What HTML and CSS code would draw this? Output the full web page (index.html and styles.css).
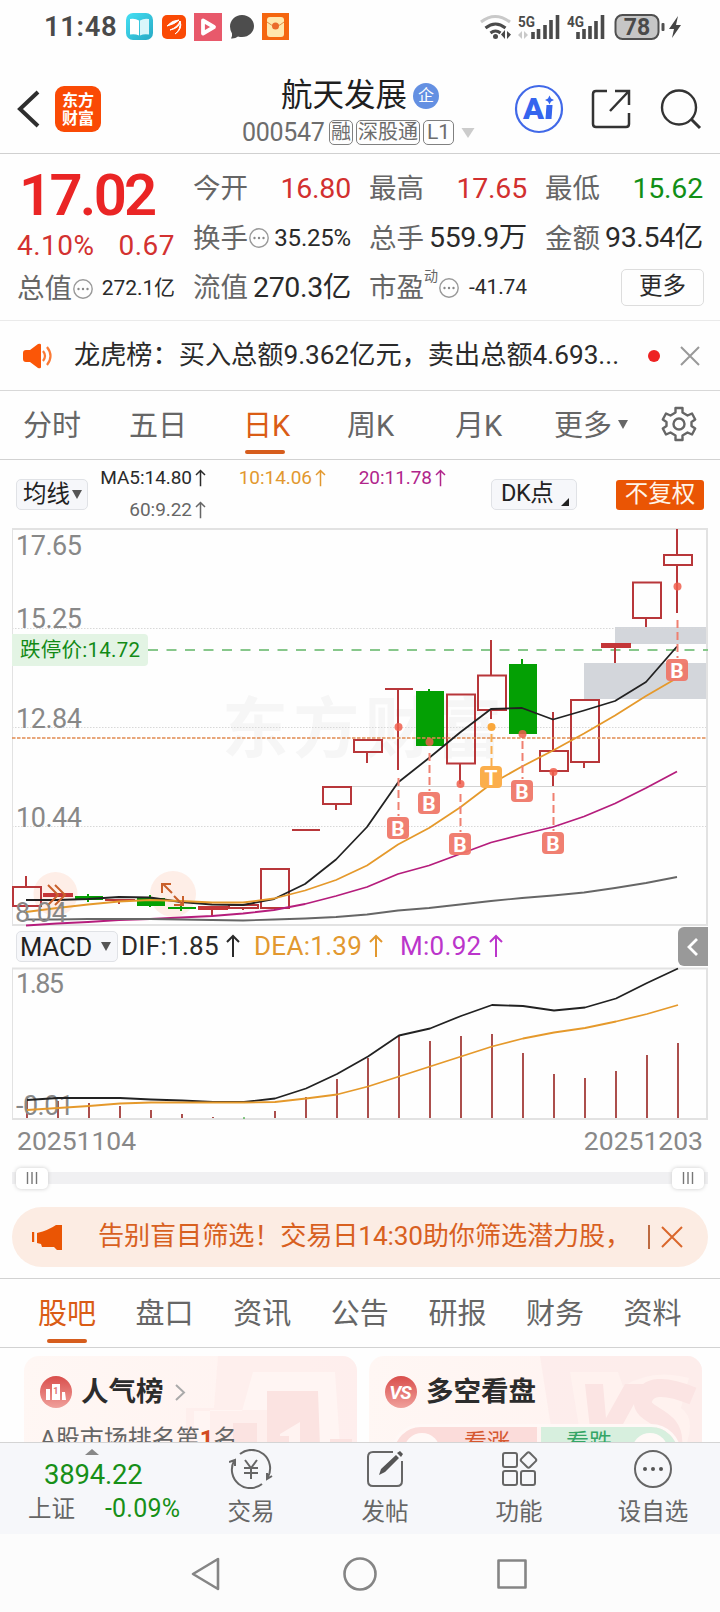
FILE: index.html
```html
<!DOCTYPE html>
<html lang="zh-CN">
<head>
<meta charset="utf-8">
<title>航天发展 000547</title>
<link rel="stylesheet" href="styles.css">
</head>
<body>
<svg class="defs" width="0" height="0">
  <symbol id="up" viewBox="0 0 14 24"><path d="M7 23V2M1 8l6-6 6 6" fill="none" stroke="currentColor" stroke-width="2"/></symbol>
  <symbol id="info" viewBox="0 0 20 20"><circle cx="10" cy="10" r="9.2" fill="none" stroke="#999" stroke-width="1.4"/><g fill="#888"><circle cx="5.5" cy="10" r="1.2"/><circle cx="10" cy="10" r="1.2"/><circle cx="14.500" cy="10" r="1.2"/></g></symbol>
  <linearGradient id="disc" x1="0" y1="0" x2="0" y2="1"><stop offset="0" stop-color="#d94e4b"/><stop offset="1" stop-color="#f0a09b"/></linearGradient>
</svg>

<div class="status">
  <span class="clock">11:48</span>
  <svg class="apps" width="170" height="54" viewBox="124 0 170 54">
    <defs><linearGradient id="bk" x1="0" y1="0" x2="1" y2="1"><stop offset="0" stop-color="#45e0f4"/><stop offset="1" stop-color="#27a9c4"/></linearGradient></defs>
    <rect x="126" y="13" width="27" height="27" rx="7" fill="url(#bk)"/>
    <path d="M130 19q5-1 9 1.500v15q-4-2-9-1z" fill="#fff"/><path d="M149 19q-5-1-9 1.500v15q4-2 9-1z" fill="#d9f6fa"/>
    <rect x="162" y="15" width="24" height="24" rx="5" fill="#fa4a05"/>
    <path d="M167 26q5-6 12-6-4 4-12 6zM170 30q8-3 10-9 0 7-10 9zM175 34q6-4 5-13 3 8-5 13z" fill="#fff" stroke="#fff"/>
    <rect x="194" y="13" width="28" height="28" fill="#e8596b"/>
    <path d="M203 20.500l11 6.500-11 6.500z" fill="none" stroke="#fff" stroke-width="3.800" stroke-linejoin="round"/>
    <path d="M242 15c7 0 12 5 12 11s-5 11-12 11q-2 0-4-.5-3 2.500-7 2 1.500-3 1-5-2-3-2-7c0-6 5-11.500 12-11.500z" fill="#4d4d4d"/>
    <rect x="262" y="13" width="27" height="27" fill="#f5660f"/>
    <rect x="267" y="17" width="17" height="20" rx="3" fill="#ffe7ae"/>
    <path d="M267 22q9 8 17 0" fill="none" stroke="#e08a43"/><circle cx="275.500" cy="26" r="3.500" fill="#ea6a2c"/>
  </svg>
  <svg class="signals" width="206" height="54" viewBox="478 0 206 54">
    <g fill="none" stroke="#4a4a4a" stroke-width="3">
      <path d="M481 22q14-11 29 0" stroke="#c9c9c9"/><path d="M485.500 28q10-8 20 0M490.500 33q5-4 10 0"/>
    </g>
    <circle cx="495.500" cy="36.500" r="2.500" fill="#4a4a4a"/>
    <path d="M505 30v9l-4-4.500zM507 31v8l4-4.500z" fill="#4a4a4a"/>
    <path d="M522 31v8l-4-4zM524 31v8l4-4z" fill="#c9c9c9"/>
    <path d="M533 39v-7M538.500 39v-10M545 39v-14M551 39V20M557.500 39V15M578 39v-7M584 39v-10M590 39v-13M596 39V21M602.500 39V15" stroke="#4a4a4a" stroke-width="3.600"/>
    <text x="518" y="26.500" textLength="17" lengthAdjust="spacingAndGlyphs" class="gen">5G</text>
    <text x="567" y="26.500" textLength="17" lengthAdjust="spacingAndGlyphs" class="gen">4G</text>
    <rect x="615.500" y="15" width="43" height="24" rx="7" fill="#c6c6c6" stroke="#505050" stroke-width="2"/>
    <rect x="661.500" y="23" width="3" height="8" rx="1" fill="#505050"/>
    <text x="637" y="35" text-anchor="middle" class="batt">78</text>
    <path d="M678 16l-9 13h5l-2 9 9-13h-5z" fill="#444"/>
  </svg>
</div>

<header class="header">
  <svg class="back" width="24" height="40" viewBox="0 0 24 40"><path d="M22 3L4 20l18 17" fill="none" stroke="#2e2e2e" stroke-width="4"/></svg>
  <div class="logo">东方<br>财富</div>
  <div class="stock">
    <div class="name">航天发展<span class="qi">企</span></div>
    <div class="code"><span class="num">000547</span><i>融</i><i>深股通</i><i class="l1">L1</i><svg width="14" height="10" viewBox="0 0 13 10"><path d="M0 0h13L6.500 10z" fill="#ccc"/></svg></div>
  </div>
  <svg class="tools" width="190" height="50" viewBox="514 84 190 50">
    <circle cx="539" cy="109" r="23" fill="none" stroke="#4169e8" stroke-width="2.200"/>
    <text x="523" y="118.500" class="ai" textLength="21" lengthAdjust="spacingAndGlyphs">A</text><path d="M546.500 105h6l-1 14h-6z" fill="#3565ee"/><path d="M549.500 95.500l1.500 3 3 1.500-3 1.500-1.500 3-1.500-3-3-1.500 3-1.500z" fill="#3565ee"/>
    <path d="M607 91h-11q-3 0-3 3v30q0 3 3 3h30q3 0 3-3v-11M615 91h14v14M628 92l-18 19" fill="none" stroke="#333" stroke-width="2.500"/>
    <circle cx="679" cy="107.500" r="17" fill="none" stroke="#333" stroke-width="2.400"/><path d="M691 119l9 9" stroke="#333" stroke-width="3"/>
  </svg>
</header>

<section class="quote">
  <div class="col first">
    <div class="price">17.02</div>
    <div class="row change"><span>4.10%</span><span>0.67</span></div>
    <div class="row"><span class="lab">总值<svg class="info"><use href="#info"/></svg></span><b class="sm">272.1亿</b></div>
  </div>
  <div class="col">
    <div class="row"><span class="lab">今开</span><b class="red">16.80</b></div>
    <div class="row"><span class="lab">换手<svg class="info"><use href="#info"/></svg></span><b class="md">35.25%</b></div>
    <div class="row"><span class="lab">流值</span><b>270.3亿</b></div>
  </div>
  <div class="col">
    <div class="row"><span class="lab">最高</span><b class="red">17.65</b></div>
    <div class="row"><span class="lab">总手</span><b>559.9万</b></div>
    <div class="row"><span class="lab">市盈<sup>动</sup><svg class="info"><use href="#info"/></svg></span><b class="sm">-41.74</b></div>
  </div>
  <div class="col">
    <div class="row"><span class="lab">最低</span><b class="green">15.62</b></div>
    <div class="row"><span class="lab">金额</span><b>93.54亿</b></div>
    <div class="row end"><span class="more">更多</span></div>
  </div>
</section>

<section class="news">
  <svg width="32" height="26" viewBox="0 0 32 26"><path d="M0 10q0-3 3-3h4l8-6q3-1 3 1v22q0 2-3 1l-8-6H3q-3 0-3-3z" fill="#fb5607"/><path d="M20 8q4 5 0 10M24 4q7 9 0 18" fill="none" stroke="#fb7a35" stroke-width="2.200"/></svg>
  <span class="news-text">龙虎榜：买入总额9.362亿元，卖出总额4.693...</span>
  <span class="dot"></span>
  <svg width="20" height="20" viewBox="0 0 20 20"><path d="M1 1l18 18M19 1L1 19" stroke="#999" stroke-width="2"/></svg>
</section>

<nav class="periods">
  <span class="p1">分时</span><span class="p2">五日</span><span class="p3 on">日K</span><span class="p4">周K</span><span class="p5">月K</span><span class="p6">更多<svg width="10" height="9" viewBox="0 0 10 9"><path d="M0 0h10L5 9z" fill="#666"/></svg></span>
  <svg class="gear" width="36" height="36" viewBox="0 0 36 36"><path d="M14.500 2h7v4.500l5 3 4.500-2 3.200 6-3.700 2.500v4l3.700 2.500-3.200 6-4.500-2-5 3V34h-7v-4.500l-5-3-4.500 2-3.200-6L5.500 20v-4l-3.700-2.500 3.200-6 4.500 2 5-3z" fill="none" stroke="#666" stroke-width="2.400" stroke-linejoin="round"/><circle cx="18" cy="18" r="5.500" fill="none" stroke="#666" stroke-width="2.400"/></svg>
</nav>

<section class="averages">
  <span class="chip avg">均线<svg width="10" height="9" viewBox="0 0 10 9"><path d="M0 0h10L5 9z" fill="#555"/></svg></span>
  <div class="ma">
    <span>MA5:14.80<svg><use href="#up"/></svg></span><span class="or">10:14.06<svg><use href="#up"/></svg></span><span class="mg">20:11.78<svg><use href="#up"/></svg></span>
    <span class="gy">60:9.22<svg><use href="#up"/></svg></span>
  </div>
  <span class="chip dk">DK点<svg width="8" height="8" viewBox="0 0 8 8"><path d="M8 0v8H0z" fill="#222"/></svg></span>
  <span class="fq">不复权</span>
</section>

<svg class="kline" width="720" height="399" viewBox="0 527 720 399">
  <text x="222" y="751" class="watermark" textLength="280">东方财富</text>
  <g fill="#d3d6db"><path d="M615 626h92v17h-92zM584 662h123v36H584z"/></g>
  <path d="M12 627.500h695M12 726.500h695M12 825.500h695" stroke="#d8d8d8" stroke-dasharray="1.500 1.500"/>
  <path d="M352 785.500h355" stroke="#d2d2d2"/>
  <path d="M12.500 528V924" stroke="#e2e2e2"/><path d="M12 528h695v396H12" fill="none" stroke="#e2e2e2" stroke-width="2"/>
  <path d="M148 649h560" stroke="#87c78b" stroke-width="2" stroke-dasharray="10 8.500"/>
  <circle cx="55.500" cy="893" r="22" fill="#feeee7"/><circle cx="173" cy="893" r="23" fill="#feeee7"/>
  <g fill="none" stroke="#b8373a" stroke-width="2">
    <path d="M13 886h28v19H13zM261 868h28v39h-28zM323 786h28v17h-28zM354 739h28v12h-28zM447 693.500h28v69h-28zM478 674.500h28v34.500h-28zM540 750h28v20h-28zM571 699h28v62h-28zM633 581.500h28v35.500h-28zM664 554h28v10h-28zM229 904h29v3h-29z"/>
    <path d="M26 875v11M292 829h28M336 804v5M367 752v10M398 688v81M385 688h28M460 763v20M491 639v35M491 709v9M553 711v39M553 770v15M584 761v6M615 647v15M646 617v9M677 528v26M677 565v47M119 899v4M212 907v8M243 907v2M105 899h30"/>
  </g>
  <path d="M43 892h30v4H43zM601 642h30v5h-30zM198 905h30v4h-30z" fill="#c43638"/>
  <path d="M75 895h28v4H75zM137 897h28v8h-28zM168 906h28v2h-28zM416 690h28v55h-28zM509 663h28v70h-28zM87 893h2v8h-2zM149 894h2v12h-2zM180 904h2v6h-2zM428 688h2v3h-2zM521 658h2v6h-2z" fill="#04a004"/>
  <path d="M12 737h695" stroke="#e18a50" stroke-dasharray="3.500 1.500" stroke-width="1.600"/>
  <g fill="none" stroke-width="1.800" stroke-linejoin="round">
    <path stroke="#222" d="M26 899L57 899 88 898 119 896 150 896.500 181 901 212 903.500 243 904 274 898 305 883 336 858.500 367 826 398 781.500 429 757 460 731.500 491 708 522 707 553 718.500 584 709.500 615 700 646 681 677 645.500"/>
    <path stroke="#e5992b" d="M26 911L57 907 88 903.500 119 900.500 150 899 181 900 212 901.500 243 901.500 274 897.500 305 889.500 336 879 367 864.500 398 843.500 429 827 460 806.500 491 783 522 765.500 553 749.500 584 732.500 615 714.500 646 695 677 677"/>
    <path stroke="#b51d7c" d="M26 924.500L57 922.500 88 921 119 919 150 918 181 916.500 212 915 243 912.500 274 909 305 903 336 895 367 886 398 873 429 864.500 460 853 491 841.500 522 833.500 553 826 584 815.500 615 802.500 646 787 677 770.500"/>
    <path stroke="#666" d="M26 918.500L57 918.500 88 918 119 918 150 918 181 918.500 212 919 243 919.500 274 918.500 305 917.500 336 916 367 913.500 398 909.500 429 907 460 903.500 491 900 522 897 553 894.500 584 891.500 615 887 646 882 677 876"/>
  </g>
  <g fill="none" stroke="#c9602b" stroke-width="2"><path d="M48 884l10 10-10 10M55 884l10 10-10 10M172 892l-9-9M162 892v-9h9M174 895l9 9M183 895v9h-9"/></g>
  <g stroke="#ef8071" stroke-width="2" stroke-dasharray="8 4" fill="none">
    <path d="M398.500 777v38M429.500 752v38M460.500 793v38M522.500 740v38M553.500 792v38M677.500 619v38"/><path d="M491.500 733v32" stroke="#f8ad4f"/>
  </g>
  <g fill="#f05e4c" fill-opacity=".85"><circle cx="398.500" cy="726" r="4"/><circle cx="429.500" cy="741" r="4"/><circle cx="460.500" cy="783" r="4"/><circle cx="522.500" cy="733" r="4"/><circle cx="553.500" cy="771" r="4"/><circle cx="677.500" cy="585.500" r="4"/></g>
  <circle cx="491.500" cy="726" r="4" fill="#faa83c"/>
  <g fill="#ef7566" fill-opacity=".93"><rect x="387" y="816" width="22" height="22" rx="4"/><rect x="418" y="791" width="22" height="22" rx="4"/><rect x="449" y="832" width="22" height="22" rx="4"/><rect x="511" y="779" width="22" height="22" rx="4"/><rect x="542" y="831" width="22" height="22" rx="4"/><rect x="666" y="658" width="22" height="22" rx="4"/></g>
  <rect x="480" y="765" width="22" height="22" rx="4" fill="#fbae4b"/>
  <g class="mark"><text x="398" y="834.500">B</text><text x="429" y="809.500">B</text><text x="460" y="850.500">B</text><text x="491" y="783.500">T</text><text x="522" y="797.500">B</text><text x="553" y="849.500">B</text><text x="677" y="676.500">B</text></g>
  <path d="M12 633h132q4 0 4 4v24q0 4-4 4H12z" fill="#e3f4e4"/>
  <text x="20" y="656" class="limit" textLength="120">跌停价:14.72</text>
  <g class="axis"><text x="16" y="554" textLength="66">17.65</text><text x="16" y="627" textLength="66">15.25</text><text x="16" y="727" textLength="66">12.84</text><text x="16" y="826" textLength="66">10.44</text><text x="15" y="921" textLength="52">8.04</text></g>
</svg>

<section class="macd-bar">
  <span class="chip macd">MACD<svg width="10" height="9" viewBox="0 0 10 9"><path d="M0 0h10L5 9z" fill="#555"/></svg></span>
  <span class="dif">DIF:1.85<svg><use href="#up"/></svg></span><span class="dea">DEA:1.39<svg><use href="#up"/></svg></span><span class="m">M:0.92<svg><use href="#up"/></svg></span>
  <span class="fold"><svg width="30" height="39" viewBox="0 0 30 39"><path d="M19 12l-8 8 8 8" fill="none" stroke="#fff" stroke-width="2.800"/></svg></span>
</section>

<svg class="macd-chart" width="720" height="154" viewBox="0 966 720 154">
  <path d="M12.500 967v151" stroke="#e2e2e2"/><path d="M12 967.500h695V1118H12" fill="none" stroke="#e2e2e2" stroke-width="2"/>
  <path stroke="#a33c3a" stroke-width="1.800" d="M27 1117v-20M58 1117v-17M89 1117v-15M120 1117v-12M151 1117v-8M182 1117v-4M213 1117v-1M275 1117v-7M306 1117v-21M337 1117v-39M368 1117v-60M399 1117v-82M430 1117v-77M461 1117v-82M492 1117v-84M523 1117v-65M554 1117v-44M585 1117v-40M616 1117v-47M647 1117v-63M678 1117v-75"/>
  <path d="M243 1117h2" stroke="#159a15"/>
  <g class="axis"><text x="16" y="992" textLength="48">1.85</text><text x="16" y="1114" textLength="58">-0.01</text></g>
  <g fill="none" stroke-width="1.800" stroke-linejoin="round">
    <path stroke="#222" d="M27 1099L58 1097 89 1097 120 1097 151 1098.500 182 1099.500 213 1101 244 1101 275 1097.500 306 1087.500 337 1073 368 1055.500 399 1034.500 430 1027.500 461 1015 492 1004 523 1005 554 1009.500 585 1006.500 616 997.500 647 982 678 967.500"/>
    <path stroke="#e5992b" d="M27 1109L58 1107 89 1105 120 1102.500 151 1101.500 182 1101.500 213 1101.500 244 1101.500 275 1101 306 1097.500 337 1093.500 368 1085.500 399 1075.500 430 1065.500 461 1055.500 492 1045.500 523 1037.500 554 1031.500 585 1027 616 1020.500 647 1013 678 1004"/>
  </g>
</svg>

<div class="dates"><span>20251104</span><span>20251203</span></div>
<div class="slider"><span class="knob"><svg width="12" height="12"><path d="M1.500 0v12M6 0v12M10.500 0v12" stroke="#777" stroke-width="1.400"/></svg></span><span class="knob"><svg width="12" height="12"><path d="M1.500 0v12M6 0v12M10.500 0v12" stroke="#777" stroke-width="1.400"/></svg></span></div>

<section class="banner">
  <svg width="32" height="28" viewBox="0 0 32 28"><path d="M1 9v10" stroke="#ea5504" stroke-width="2.400"/><path d="M5 10q12-3 19-8h6v25h-5l-3-3h-12l-1-3-4-1z" fill="#ea5504"/></svg>
  <span class="banner-text">告别盲目筛选！交易日14:30助你筛选潜力股，</span>
  <span class="bar"></span>
  <svg width="22" height="22" viewBox="0 0 22 22"><path d="M1 1l20 20M21 1L1 21" stroke="#da672c" stroke-width="2"/></svg>
</section>

<nav class="tabs"><span class="on">股吧</span><span>盘口</span><span>资讯</span><span>公告</span><span>研报</span><span>财务</span><span>资料</span></nav>

<section class="cards">
  <article class="card rank">
    <svg class="deco" width="333" height="90" viewBox="0 0 333 90"><path d="M194 0h139v90H162V52h28z" fill="#fdeceb" opacity=".7"/><path d="M229 16h82l5 74h-40V54H186V90h-16V55h48z" fill="#fff5f3"/><path d="M243 35h51l2 55h-53zM209 67h24v23h-24zM306 83h22v7h-22z" fill="#fbe3e1"/><path d="M256 78l20-12v24h-11V80h-9z" fill="#fff3f1"/></svg>
    <h3><svg width="32" height="32" viewBox="0 0 32 32"><circle cx="16" cy="16" r="16" fill="url(#disc)"/><path d="M6 24V13h4v11zM12 24V8h8v16zM22 24v-8h3l1 8z" fill="#fff"/><text x="15.800" y="18" text-anchor="middle" class="one">1</text></svg>人气榜<svg class="chev" width="11" height="17" viewBox="0 0 11 17"><path d="M1 1l8 7.500L1 16" fill="none" stroke="#aaa" stroke-width="2"/></svg></h3>
    <p>A股市场排名第<em>1</em>名</p>
  </article>
  <article class="card versus">
    <svg class="deco" width="333" height="90" viewBox="0 0 333 90"><path d="M171 0h162v90H185z" fill="#fdebea" opacity=".8"/><path d="M201 16h48l5 14q30-18 66-8l-8 30q15 10 5 38H213z" fill="#fff3f1" opacity=".7"/><path d="M216 28h18l3 34 19-34h20l-34 62h-19z" fill="#fbe4e3"/><path d="M324 40q-44-18-50 4c-3 18 34 14 30 46" fill="none" stroke="#fbe4e3" stroke-width="18"/></svg>
    <h3><svg width="32" height="32" viewBox="0 0 32 32"><circle cx="16" cy="16" r="16" fill="url(#disc)"/><text x="15" y="23" text-anchor="middle" class="vs">VS</text></svg>多空看盘</h3>
    <div class="vote"><span class="rise"><i></i>看涨</span><span class="fall">看跌<i></i></span></div>
  </article>
</section>

<footer class="dock">
  <div class="index"><svg width="14" height="6" viewBox="0 0 14 6"><path d="M0 6l7-6 7 6z" fill="#888"/></svg><strong>3894.22</strong><div><span>上证</span><span class="pct">-0.09%</span></div></div>
  <div class="act"><svg width="44" height="40" viewBox="-22 -20 44 40"><g fill="none" stroke="#666" stroke-width="2"><path d="M-11-15A18.500 18.500 0 0 1 17 8M11 15A18.500 18.500 0 0 1-17-8M-22-7l6-2v6M21 7l-5 3v-6M-6-9l6 8 6-8M-7-1H7M-7 4H7M0-1v11"/></g></svg>交易</div>
  <div class="act"><svg width="44" height="40" viewBox="-22 -20 44 40"><path d="M8-17h-20q-5 0-5 5v24q0 5 5 5h24q5 0 5-5V-8" fill="none" stroke="#666" stroke-width="2"/><path d="M-6 6l2-6 15-14 3 3L0 3zM12-16l3-2 3 3-2 3z" fill="#555"/></svg>发帖</div>
  <div class="act"><svg width="44" height="40" viewBox="-22 -20 44 40"><g fill="none" stroke="#666" stroke-width="2"><rect x="-16" y="-16" width="14" height="14" rx="2"/><rect x="-16" y="2" width="14" height="14" rx="2"/><rect x="2" y="2" width="14" height="14" rx="2"/><rect x="3.500" y="-15" width="12" height="12" rx="2" transform="rotate(45 9.500 -9)"/></g></svg>功能</div>
  <div class="act"><svg width="44" height="40" viewBox="-22 -20 44 40"><circle r="18" fill="none" stroke="#666" stroke-width="2"/><g fill="#555"><circle cx="-8" r="2"/><circle r="2"/><circle cx="8" r="2"/></g></svg>设自选</div>
</footer>

<div class="sysnav">
  <svg width="720" height="80" viewBox="0 0 720 80"><g fill="none" stroke="#858585" stroke-width="2.600" stroke-linejoin="round"><path d="M193 40l25-15v30z"/><circle cx="360" cy="40" r="15.500"/><rect x="498.500" y="26.500" width="27" height="27"/></g></svg>
</div>
</body>
</html>
```

FILE: styles.css
```css
* { box-sizing: border-box; }
body { margin: 0; width: 720px; height: 1612px; overflow: hidden; background: #fefefe; color: #2a2a2a; font-family: Roboto, "Noto Sans CJK SC", sans-serif; line-height: 1.2; display: flex; flex-direction: column; }
body > * { flex: none; }
svg { display: block; flex: none; }
.defs { position: absolute; }
i, em { font-style: normal; }

.status { height: 54px; display: flex; }
.clock { width: 80px; margin-left: 44px; font-size: 27.5px; font-weight: 600; color: #4a4a4a; line-height: 54px; letter-spacing: .6px; }
.signals { margin-left: 184px; }
.gen { font: 700 15px Roboto, sans-serif; fill: #4a4a4a; }
.batt { font: 700 23px Roboto, sans-serif; fill: #4a4a4a; }

.header { height: 100px; border-bottom: 1px solid #d0d0d0; display: flex; align-items: center; padding: 10px 0 0 16px; }
.logo { width: 46px; height: 46px; margin-left: 15px; border-radius: 9px; background: #fa4a05; color: #fff; font: 700 16px/18px "Noto Sans CJK SC", sans-serif; text-align: center; padding-top: 4px; }
.stock { width: 256px; margin: 6px 16px 0 141px; }
.name { display: flex; align-items: center; font-size: 31.5px; line-height: 36px; margin-left: 39px; width: max-content; color: #1f1f1f; }
.qi { width: 26px; height: 26px; margin-left: 6px; border-radius: 50%; background: #6490e2; color: #fff; font-size: 16px; line-height: 25px; text-align: center; }
.code { display: flex; align-items: center; gap: 3px; height: 26px; margin-top: 6px; font-size: 25px; color: #6d6d6d; }
.code .num { width: 84px; letter-spacing: -.3px; }
.code i { height: 25px; border: 1.500px solid #808080; border-radius: 5px; font-size: 20px; line-height: 22px; padding: 0 1px; white-space: nowrap; }
.code .l1 { padding: 0 3px; font-size: 21px; }
.code svg { margin-left: 4px; }
.ai { font: 900 29px Roboto, sans-serif; fill: #3565ee; }

.quote { height: 167px; border-bottom: 1px solid #eaeaea; padding: 9px 16px 0 17px; display: flex; gap: 18px; }
.col { width: 158px; padding-top: 1px; display: flex; flex-direction: column; }
.col.first { padding-top: 0; }
.row { height: 49.5px; display: flex; align-items: center; justify-content: space-between; white-space: nowrap; }
.lab { display: flex; align-items: center; font-size: 27.5px; color: #666; }
.info { width: 20px; height: 20px; margin-left: 1px; }
.lab sup { font-size: 14px; line-height: 14px; margin-top: -24px; }
.row b { font-weight: 400; font-size: 28.5px; letter-spacing: -.35px; }
.row .md { font-size: 24px; letter-spacing: -.2px; }
.row .sm { font-size: 21px; letter-spacing: -.1px; }
.row .red { color: #d2302f; letter-spacing: -.2px; }
.row .green { color: #128f16; letter-spacing: -.2px; }
.price { height: 64px; margin-left: 2px; font-size: 58px; font-weight: 600; color: #ea2525; letter-spacing: -2.7px; line-height: 64px; }
.change { height: 37px; padding-top: 1px; color: #d33130; font-size: 28px; letter-spacing: .5px; }
.end { justify-content: flex-end; }
.more { width: 83px; height: 37px; border: 1.500px solid #ddd; border-radius: 5px; font-size: 23.5px; line-height: 32px; text-align: center; margin-right: -1px; }

.news { height: 70px; border-bottom: 1px solid #d8d8d8; display: flex; align-items: center; padding-left: 23px; }
.news-text { width: 546px; margin-left: 19px; font-size: 26.2px; white-space: nowrap; }
.dot { width: 12px; height: 12px; border-radius: 50%; background: #ee2222; margin: 0 20px 0 28px; }

.periods { height: 69px; border-bottom: 1px solid #d2d2d2; display: flex; align-items: center; padding: 0 0 2px 23px; font-size: 29px; color: #666; }
.periods span { white-space: nowrap; display: flex; align-items: center; height: 67px; padding-top: 5px; }
.p1 { width: 106px; } .p2 { width: 114px; } .p3 { width: 104px; } .p4 { width: 108px; } .p5 { width: 99px; } .p6 { width: 107px; }
.p6 svg { margin: -4px 0 0 6px; }
.on { color: #da5c15; position: relative; }
.on::after { content: ""; position: absolute; left: 2px; bottom: 4px; width: 40px; height: 4px; border-radius: 2px; background: #d65d1d; }

.averages { height: 68px; display: flex; padding: 0 16px; }
.chip { display: flex; align-items: center; border: 1.500px solid #e0e2e6; border-radius: 5px; background: #f6f7fa; color: #222; white-space: nowrap; }
.avg { width: 72px; height: 31px; margin-top: 19px; padding: 0 0 1px 6px; font-size: 23.500px; gap: 2px; }
.ma { display: grid; grid-template-columns: 106px 120px 120px; grid-template-rows: 32px 32px; justify-items: end; width: 346px; margin: 2px 0 0 12px; font-size: 19px; }
.ma span { display: flex; align-items: center; gap: 3px; height: 32px; letter-spacing: -.05px; }
.ma svg { width: 11px; height: 18px; }
.or { color: #e2982f; } .mg { color: #b0258b; } .gy { color: #666; }
.dk { width: 86px; height: 31px; margin: 19px 0 0 45px; padding: 0 0 2px 9px; font-size: 23.500px; letter-spacing: -.4px; gap: 8px; }
.dk svg { margin-top: 16px; }
.fq { width: 88px; height: 30px; margin: 20px 0 0 39px; border-radius: 3px; background: #ea5504; color: #fff4e8; font-size: 23.500px; line-height: 28px; text-align: center; }

.watermark { font: 700 66px "Noto Sans CJK SC", sans-serif; fill: #f6f6f6; }
.axis { font: 27px Roboto, sans-serif; fill: #888; }
.limit { font: 20.5px Roboto, "Noto Sans CJK SC", sans-serif; fill: #128a16; }
.mark { font: 700 21px Roboto, sans-serif; fill: #fff; text-anchor: middle; }

.macd-bar { height: 40px; display: flex; align-items: flex-start; font-size: 26px; line-height: 30px; }
.macd-bar > span { margin-top: 4px; }
.dif, .dea, .m { display: flex; align-items: center; gap: 7px; white-space: nowrap; letter-spacing: .3px; }
.dif svg, .dea svg, .m svg { width: 14px; height: 24px; }
.macd { width: 102px; height: 31px; margin-left: 16px; padding-left: 3px; gap: 9px; font-size: 25.500px; }
.dif { margin-left: 3px; width: 133px; }
.dea { width: 146px; color: #e2982f; }
.m { width: 145px; color: #bb35cb; }
.macd-bar .fold { margin: 0 0 0 133px; width: 30px; height: 39px; border-radius: 6px 0 0 6px; background: #999; }

.dates { height: 43px; display: flex; justify-content: space-between; padding: 0 17px; font-size: 26.500px; line-height: 40px; color: #888; }
.slider { height: 28px; display: flex; justify-content: space-between; align-items: center; padding: 0 4px; margin: 0 12px; background: linear-gradient(#f0f0f2, #f0f0f2) center / 100% 12px no-repeat; }
.knob { width: 32px; height: 21px; border-radius: 5px; background: #fff; box-shadow: 0 0 4px #ccc; display: flex; align-items: center; justify-content: center; }
.banner { height: 60px; margin: 15px 12px 0; border-radius: 30px; background: #fcece3; display: flex; align-items: center; padding-left: 20px; }
.banner-text { width: 545px; margin-left: 34px; font-size: 26.200px; color: #d8601f; white-space: nowrap; letter-spacing: -.15px; padding-bottom: 1px; }
.bar { width: 1.500px; height: 24px; background: #bd6a40; margin: 0 11px 0 5px; }

.tabs { height: 70px; margin-top: 11px; border-top: 1px solid #d2d2d2; border-bottom: 1px solid #d2d2d2; display: flex; gap: 39.600px; padding-left: 38px; font-size: 29px; line-height: 71px; color: #666; white-space: nowrap; }
.tabs span { width: 58px; height: 68px; }
.tabs .on { color: #da5c15; }
.tabs .on::after { left: 9px; }

.cards { height: 94px; padding: 8px 0 0 24px; display: flex; gap: 12px; overflow: hidden; }
.card { width: 333px; height: 110px; border-radius: 15px; background: linear-gradient(100deg, #fff7f4, #fff2f0); position: relative; overflow: hidden; padding: 20px 16px; }
.deco { position: absolute; left: 0; top: 0; }
.card h3 { position: relative; margin: 0; display: flex; align-items: center; gap: 9px; height: 32px; font-size: 27.500px; line-height: 30px; padding-bottom: 0; color: #2c2c2c; }
.chev { margin-left: 2px; }
.card p { position: relative; margin: 13px 0 0; font-size: 24px; line-height: 36px; color: #666; }
.card em { color: #d24b22; font-weight: 700; }
.one { font: 700 9px Roboto, sans-serif; fill: #e07370; }
.vs { font: italic 700 19px Roboto, sans-serif; fill: #fff; letter-spacing: -1px; }
.vote { position: relative; display: flex; gap: 4px; width: 290px; height: 60px; margin: 16px 0 0 6px; border: 3px solid #fff8f6; border-radius: 30px; overflow: hidden; font-size: 23px; line-height: 32px; white-space: nowrap; }
.vote span { height: 54px; display: flex; }
.vote i { width: 36px; height: 36px; border-radius: 50%; background: #fff9f7; margin-top: 6px; }
.rise { width: 143px; padding-left: 10px; gap: 24px; background: #fbdcda; color: #d5572f; }
.fall { width: 137px; padding-left: 25px; gap: 20px; background: #d7efde; color: #35a566; }

.dock { height: 92px; background: #f6f7fa; border-top: 1px solid #d4d4d4; display: flex; }
.index { width: 184px; color: #179018; padding-top: 6px; }
.index svg { margin-left: 85px; }
.index strong { display: block; margin-left: 44px; font-size: 27.500px; font-weight: 400; line-height: 40px; letter-spacing: -.2px; }
.index div { display: flex; align-items: center; height: 28px; padding-left: 28px; font-size: 23.500px; color: #666; }
.index .pct { margin-left: 30px; color: #179018; font-size: 25px; letter-spacing: .2px; white-space: nowrap; }
.act { width: 134px; padding-top: 6px; display: flex; flex-direction: column; align-items: center; font-size: 23.500px; line-height: 47px; color: #666; }
.sysnav { height: 80px; background: #fcfcfc; }
```
